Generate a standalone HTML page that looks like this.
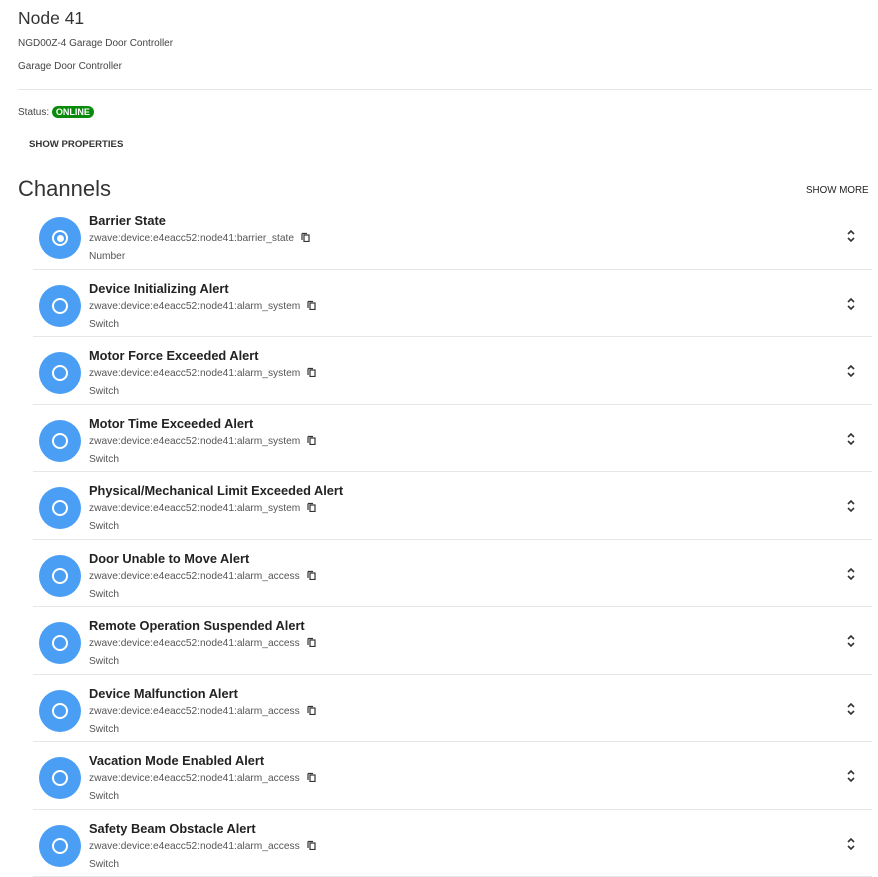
<!DOCTYPE html>
<html><head><meta charset="utf-8"><style>
*{margin:0;padding:0;box-sizing:border-box}
body{width:878px;height:830px;overflow:hidden;background:#fff;font-family:"Liberation Sans",sans-serif;color:#212121;position:relative}
.a{position:absolute;white-space:nowrap}
.row{position:absolute;left:33px;width:839px;height:67.5px;border-bottom:1px solid #e6e6e6}
.ic{position:absolute;left:6px;top:15px;width:42px;height:42px;border-radius:50%;background:#4a9ff5}
.ic:after{content:"";position:absolute;left:13px;top:13px;width:16px;height:16px;border:2.5px solid #fff;border-radius:50%;box-sizing:border-box}
.ic.on:before{content:"";position:absolute;left:17.5px;top:17.5px;width:7px;height:7px;background:#fff;border-radius:50%;z-index:1}
.t{position:absolute;left:56px;top:11px;font-size:12.8px;font-weight:600;color:#222}
.id{position:absolute;left:56px;top:30px;font-size:10.2px;color:#555}
.id svg{margin-left:7px;vertical-align:-1px}
.ty{position:absolute;left:56px;top:49px;font-size:10.2px;color:#555}
.ch{position:absolute;right:16px;top:27px}
</style></head><body>
<div class="a" style="left:18px;top:8px;font-size:17.5px;font-weight:300;color:#333">Node 41</div>
<div class="a" style="left:18px;top:38px;font-size:10px;color:#444">NGD00Z-4 Garage Door Controller</div>
<div class="a" style="left:18px;top:61px;font-size:10px;color:#444">Garage Door Controller</div>
<div class="a" style="left:18px;top:89px;width:854px;border-top:1px solid #e6e6e6"></div>
<div class="a" style="left:18px;top:106px;font-size:10px;color:#444">Status: <span style="display:inline-block;background:#0a8a0a;color:#fff;font-weight:bold;font-size:9px;padding:1px 4px;border-radius:7px">ONLINE</span></div>
<div class="a" style="left:29px;top:139px;font-size:9.6px;font-weight:600;color:#333">SHOW PROPERTIES</div>
<div class="a" style="left:18px;top:176px;font-size:22px;font-weight:300;color:#333">Channels</div>
<div class="a" style="left:806px;top:185px;font-size:9.8px;color:#222">SHOW MORE</div>
<div id="rows"></div>
<script>
var d=[["Barrier State","barrier_state","Number",1],["Device Initializing Alert","alarm_system","Switch"],["Motor Force Exceeded Alert","alarm_system","Switch"],["Motor Time Exceeded Alert","alarm_system","Switch"],["Physical/Mechanical Limit Exceeded Alert","alarm_system","Switch"],["Door Unable to Move Alert","alarm_access","Switch"],["Remote Operation Suspended Alert","alarm_access","Switch"],["Device Malfunction Alert","alarm_access","Switch"],["Vacation Mode Enabled Alert","alarm_access","Switch"],["Safety Beam Obstacle Alert","alarm_access","Switch"]];
var h="";d.forEach(function(r,i){h+='<div class="row" style="top:'+(202+i*67.5)+'px"><div class="ic'+(r[3]?' on':'')+'"></div><div class="t">'+r[0]+'</div><div class="id">zwave:device:e4eacc52:node41:'+r[1]+'<svg width="9" height="10" viewBox="0 0 9 10"><path d="M1 1.5V8M1 1.5H6" stroke="#333" stroke-width="1.2" fill="none"/><rect x="3" y="3" width="5" height="6.5" stroke="#333" stroke-width="1.2" fill="none"/></svg></div><div class="ty">'+r[2]+'</div><svg class="ch" width="10" height="14" viewBox="0 0 10 14"><path d="M2 5L5 2L8 5M2 9L5 12L8 9" stroke="#333" stroke-width="1.6" fill="none"/></svg></div>'});
document.getElementById("rows").innerHTML=h;
</script>
</body></html>
